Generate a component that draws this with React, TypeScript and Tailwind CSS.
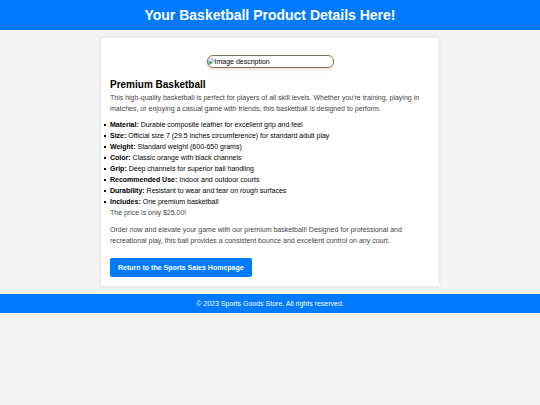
const specs = [
  { label: 'Material', text: 'Durable composite leather for excellent grip and feel' },
  { label: 'Size', text: 'Official size 7 (29.5 inches circumference) for standard adult play' },
  { label: 'Weight', text: 'Standard weight (600-650 grams)' },
  { label: 'Color', text: 'Classic orange with black channels' },
  { label: 'Grip', text: 'Deep channels for superior ball handling' },
  { label: 'Recommended Use', text: 'Indoor and outdoor courts' },
  { label: 'Durability', text: 'Resistant to wear and tear on rough surfaces' },
  { label: 'Includes', text: 'One premium basketball' },
]

function BrokenImageIcon() {
  return (
    <svg viewBox="0 0 16 16" className="h-[7px] w-[7px] shrink-0" aria-hidden="true">
      <path d="M1 1h9l5 5v2L4 15H1z" fill="#c3dafc" stroke="#a3a9b0" strokeWidth="1.5" />
      <path d="M10 1v5h5z" fill="#fff" stroke="#a3a9b0" />
      <path d="M1 15V10l4-3 5 3-6 5z" fill="#4fa65c" />
      <circle cx="5" cy="4.5" r="1.5" fill="#fff" />
    </svg>
  )
}

export default function App() {
  return (
    <div className="min-h-screen bg-[#f4f4f4] font-['Liberation_Sans',Arial,sans-serif] text-[7px] leading-[11px] text-black">
      <header className="bg-[#007bff] px-2 py-1 text-center text-white">
        <h1 className="text-[14px] leading-[22px] font-bold">Your Basketball Product Details Here!</h1>
      </header>

      <main className="mx-auto my-2 max-w-[338px] rounded-[2px] bg-white p-[9px] pt-[17px] shadow-[0_0_4px_rgba(0,0,0,0.1)]">
        <div
          role="img"
          aria-label="Image description"
          className="mx-auto flex h-[13px] max-w-[127px] items-center overflow-hidden rounded-[6px] border border-[#8b6b55] shadow-[0_2px_3px_rgba(0,0,0,0.1)]"
        >
          <BrokenImageIcon />
          <span>Image description</span>
        </div>

        <h2 className="mt-[9px] text-[10px] leading-[15px] font-bold">Premium Basketball</h2>
        <p className="text-[#444]">
          This high-quality basketball is perfect for players of all skill levels. Whether you're training, playing in
          matches, or enjoying a casual game with friends, this basketball is designed to perform.
        </p>

        <ul className="mt-[5px] -ml-[6px]">
          {specs.map((spec) => (
            <li
              key={spec.label}
              className="flex items-center before:mr-1 before:h-[2px] before:w-[2px] before:shrink-0 before:bg-black"
            >
              <span>
                <strong>{spec.label}:</strong> {spec.text}
              </span>
            </li>
          ))}
        </ul>
        <p className="text-[#444]">The price is only $25.00!</p>

        <p className="mt-[6px] text-[#444]">
          Order now and elevate your game with our premium basketball! Designed for professional and recreational play,
          this ball provides a consistent bounce and excellent control on any court.
        </p>

        <a href="#home" className="mt-3 inline-block rounded-[2px] bg-[#007bff] px-2 py-1 font-bold text-white">
          Return to the Sports Sales Homepage
        </a>
      </main>

      <footer className="bg-[#007bff] px-2 py-1 text-center text-white">
        <p>© 2023 Sports Goods Store. All rights reserved.</p>
      </footer>
    </div>
  )
}
